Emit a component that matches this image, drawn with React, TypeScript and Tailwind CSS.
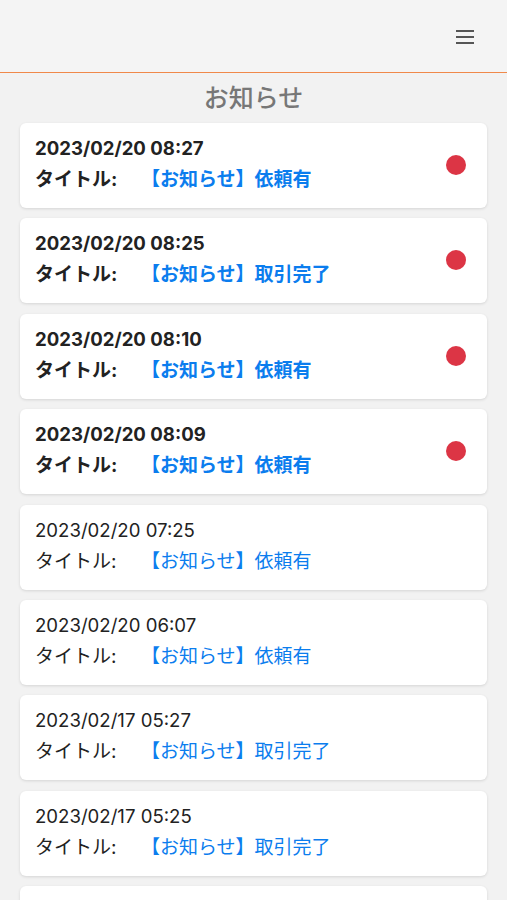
const notices = [
  { date: "2023/02/20 08:27", title: "【お知らせ】依頼有", unread: true },
  { date: "2023/02/20 08:25", title: "【お知らせ】取引完了", unread: true },
  { date: "2023/02/20 08:10", title: "【お知らせ】依頼有", unread: true },
  { date: "2023/02/20 08:09", title: "【お知らせ】依頼有", unread: true },
  { date: "2023/02/20 07:25", title: "【お知らせ】依頼有", unread: false },
  { date: "2023/02/20 06:07", title: "【お知らせ】依頼有", unread: false },
  { date: "2023/02/17 05:27", title: "【お知らせ】取引完了", unread: false },
  { date: "2023/02/17 05:25", title: "【お知らせ】取引完了", unread: false },
  { date: "2023/02/17 05:20", title: "【お知らせ】依頼有", unread: false },
];

const jp = "[font-family:Inter,'Noto_Sans_CJK_JP',sans-serif]";

export default function App() {
  return (
    <div className="min-h-screen bg-[#f2f2f2] text-[#222]">
      <header className="flex h-[73px] items-center justify-end border-b border-[#f0894a] bg-[#f4f4f4] pr-[33px]">
        <button aria-label="menu" className="pt-[1px]">
          <svg width="18" height="16" viewBox="0 0 18 16" fill="none" stroke="#555" strokeWidth={2}>
            <path d="M0 2h18M0 8h18M0 14h18" />
          </svg>
        </button>
      </header>

      <main className={`px-[20px] ${jp}`}>
        <h1 className="pt-[10px] pb-[10px] text-center text-[25px] leading-[30px] font-medium text-[#777]">
          お知らせ
        </h1>

        <ul className="flex flex-col gap-[10.4px]">
          {notices.map((n, i) => (
            <li
              key={i}
              className="flex items-center justify-between rounded-[6px] bg-white pt-[10px] pr-[21px] pb-[13px] pl-[15px] shadow-[0_1px_3px_rgba(0,0,0,0.12)]"
            >
              <div className={n.unread ? "font-bold" : "font-normal"}>
                <div className="text-[18.6px] leading-[31px]">{n.date}</div>
                <div className="flex text-[19px] leading-[31px]">
                  <span className="w-[106px] shrink-0">タイトル:</span>
                  <span className="text-[#0b7dee]">{n.title}</span>
                </div>
              </div>
              {n.unread && <span className="mt-[2px] h-[20px] w-[20px] shrink-0 rounded-full bg-[#dc3545]" />}
            </li>
          ))}
        </ul>
      </main>
    </div>
  );
}
